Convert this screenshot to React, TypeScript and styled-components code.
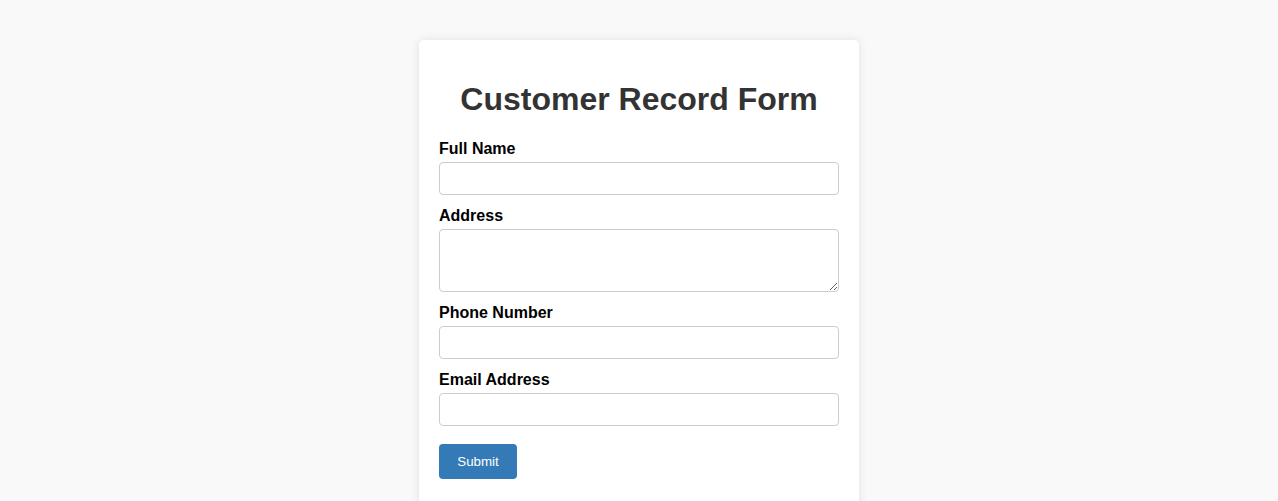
import React from "react";
import styled, { createGlobalStyle } from "styled-components";

const GlobalStyle = createGlobalStyle`
  html, body {
    margin: 0;
    padding: 0;
    background: #f9f9f9;
    font-family: "Liberation Sans", Arial, sans-serif;
  }
  * { box-sizing: border-box; }
`;

const Page = styled.div`
  display: flex;
  justify-content: center;
  padding-top: 40px;
  min-height: 501px;
`;

const Card = styled.div`
  width: 440px;
  background: #ffffff;
  border-radius: 5px;
  box-shadow: 0 0 10px rgba(0, 0, 0, 0.1);
  padding: 20px;
  align-self: flex-start;
  min-height: 480px;
`;

const Title = styled.h1`
  margin: 21px 0 21px;
  font-size: 32px;
  font-weight: bold;
  color: #333333;
  text-align: center;
  line-height: normal;
`;

const Form = styled.form`
  display: flex;
  flex-direction: column;
`;

const Label = styled.label`
  display: block;
  font-size: 16px;
  font-weight: bold;
  color: #000;
  line-height: normal;
  padding-top: 1px;
  margin-bottom: 4px;
`;

const fieldStyles = `
  display: block;
  width: 100%;
  padding: 8px;
  border: 1px solid #cccccc;
  border-radius: 4px;
  font-family: "Liberation Sans", Arial, sans-serif;
  font-size: 13.333px;
  margin: 0 0 11px;
  background: #fff;
`;

const Input = styled.input`
  ${fieldStyles}
  height: 33px;
`;

const TextArea = styled.textarea`
  ${fieldStyles}
  height: 63px;
  resize: vertical;
`;

const Button = styled.button`
  align-self: flex-start;
  margin-top: 7px;
  height: 35px;
  width: 78px;
  padding: 0;
  background: #337ab7;
  color: #ffffff;
  border: none;
  border-radius: 4px;
  font-family: "Liberation Sans", Arial, sans-serif;
  font-size: 13.333px;
  cursor: pointer;
`;

export default function App() {
  return (
    <>
      <GlobalStyle />
      <Page>
        <Card>
          <Title>Customer Record Form</Title>
          <Form onSubmit={(e) => e.preventDefault()}>
            <Label htmlFor="name">Full Name</Label>
            <Input id="name" type="text" />
            <Label htmlFor="address">Address</Label>
            <TextArea id="address" rows={3} />
            <Label htmlFor="phone">Phone Number</Label>
            <Input id="phone" type="tel" />
            <Label htmlFor="email">Email Address</Label>
            <Input id="email" type="email" />
            <Button type="submit">Submit</Button>
          </Form>
        </Card>
      </Page>
    </>
  );
}
